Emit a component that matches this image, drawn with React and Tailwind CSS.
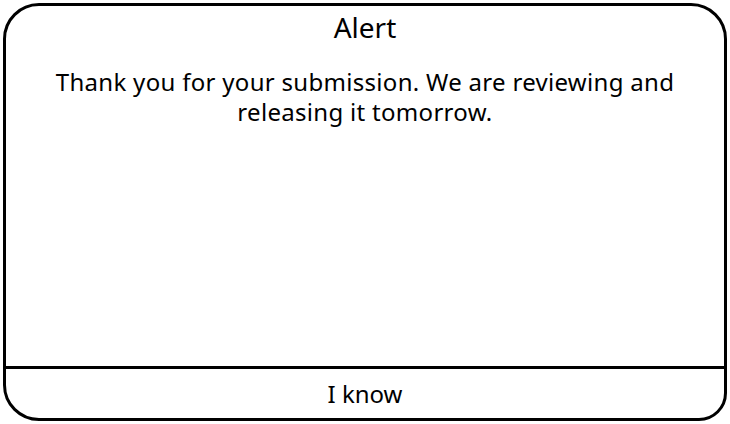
export default function App() {
  return (
    <div className="w-[730px] h-[424px] bg-white p-[3px]" style={{ fontFamily: '"Noto Sans", sans-serif' }}>
      <div className="flex h-full flex-col border-[3px] border-black rounded-[36px] rounded-br-[28px] text-black">
        <div className="flex flex-1 flex-col items-center px-6">
          <h1 className="mt-[5px] text-[28px] leading-[32px]">Alert</h1>
          <p className="mt-[24px] text-center text-[24px] leading-[30px] tracking-[0.3px]">
            Thank you for your submission. We are reviewing and
            <br />
            releasing it tomorrow.
          </p>
        </div>
        <div className="flex h-[52px] items-center justify-center border-t-[3px] border-black">
          <span className="text-[24px] leading-[30px]">I know</span>
        </div>
      </div>
    </div>
  );
}
